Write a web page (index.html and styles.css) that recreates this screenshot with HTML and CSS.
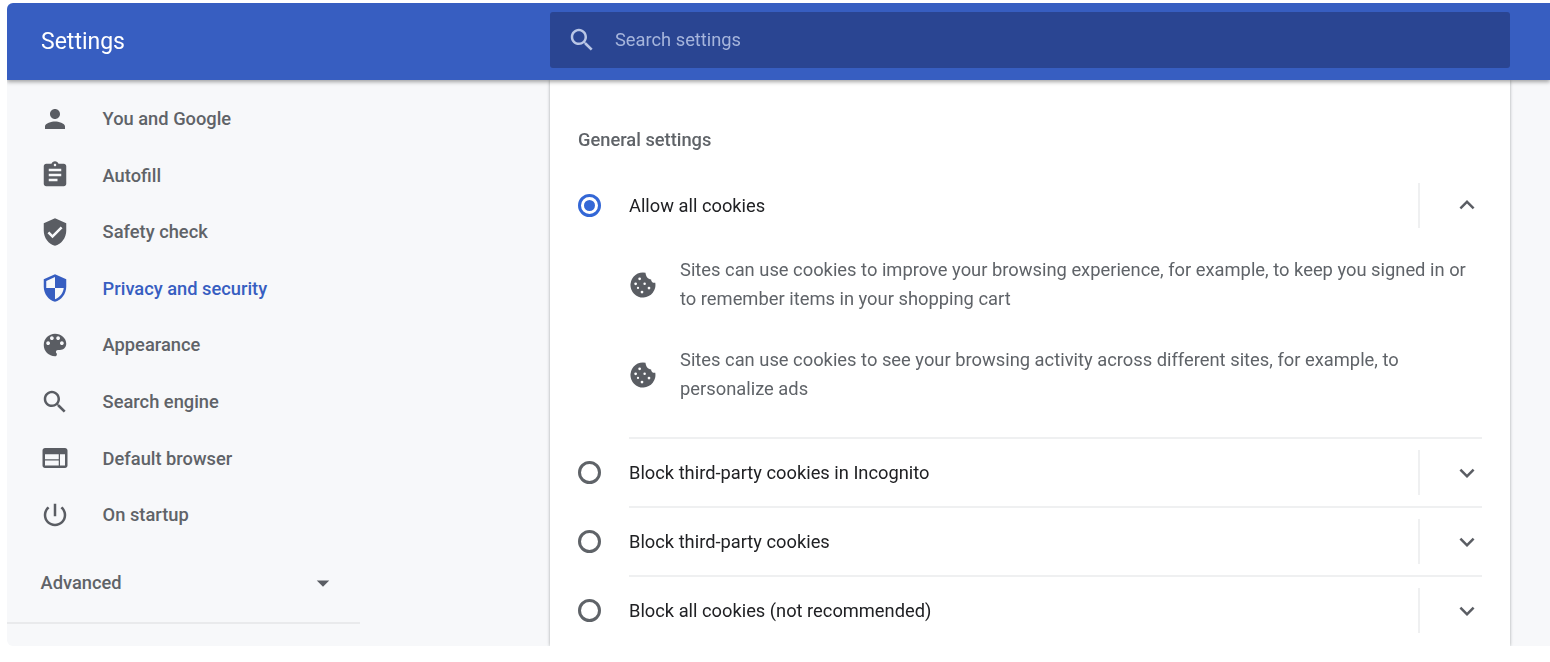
FILE: index.html
```html
<!DOCTYPE html>
<html lang="en">
<head>
    <meta charset="UTF-8">
    <title>Settings - Cookies and other site data</title>
    <link rel="stylesheet" href="styles.css">
</head>
<body>
    <svg class="defs" width="0" height="0">
        <symbol id="i-search" viewBox="0 0 24 24"><path d="M15.5 14h-.79l-.28-.27C15.41 12.59 16 11.11 16 9.5 16 5.91 13.09 3 9.5 3S3 5.91 3 9.5 5.91 16 9.5 16c1.61 0 3.09-.59 4.23-1.57l.27.28v.79l5 4.99L20.49 19l-4.99-5zm-6 0C7.01 14 5 11.99 5 9.5S7.01 5 9.5 5 14 7.01 14 9.5 11.99 14 9.5 14z"/></symbol>
        <symbol id="i-cookie" viewBox="0 0 24 24"><path fill-rule="evenodd" d="M14 2.2A10 10 0 1 0 21.8 10.2C19.5 10.5 18.5 9 18.5 7.5 16 7.5 14.2 5 14 2.2zM9.3 5.9a1.1 1.1 0 1 1 0 2.2 1.1 1.1 0 0 1 0-2.2zM6.1 9.9a1.1 1.1 0 1 1 0 2.2 1.1 1.1 0 0 1 0-2.2zM13.3 10a1 1 0 1 1 0 2 1 1 0 0 1 0-2zM16.8 13.3a1.1 1.1 0 1 1 0 2.2 1.1 1.1 0 0 1 0-2.2zM11.2 16.5a1.1 1.1 0 1 1 0 2.2 1.1 1.1 0 0 1 0-2.2zM8 13.4a.9.9 0 1 1 0 1.8.9.9 0 0 1 0-1.8z"/></symbol>
        <symbol id="i-more" viewBox="0 0 24 24"><path d="M16.59 8.59L12 13.17 7.41 8.59 6 10l6 6 6-6z"/></symbol>
        <symbol id="i-less" viewBox="0 0 24 24"><path d="M12 8l-6 6 1.41 1.41L12 10.83l4.59 4.58L18 14z"/></symbol>
    </svg>

    <div class="app">
        <header class="topbar">
            <div class="topbar-title">Settings</div>
            <div class="search">
                <svg class="icon search-icon"><use href="#i-search"/></svg>
                <span class="search-text">Search settings</span>
            </div>
        </header>

        <div class="content">
            <nav class="sidebar">
                <a class="nav-item">
                    <svg class="icon" viewBox="0 0 24 24"><path d="M12 12c2.21 0 4-1.79 4-4s-1.79-4-4-4-4 1.79-4 4 1.79 4 4 4zm0 2c-2.67 0-8 1.34-8 4v2h16v-2c0-2.66-5.33-4-8-4z"/></svg>
                    You and Google
                </a>
                <a class="nav-item">
                    <svg class="icon" viewBox="0 0 24 24"><path d="M19 3h-4.18C14.4 1.84 13.3 1 12 1c-1.3 0-2.4.84-2.82 2H5c-1.1 0-2 .9-2 2v14c0 1.1.9 2 2 2h14c1.1 0 2-.9 2-2V5c0-1.1-.9-2-2-2zm-7 0c.55 0 1 .45 1 1s-.45 1-1 1-1-.45-1-1 .45-1 1-1zm2 14H7v-2h7v2zm3-4H7v-2h10v2zm0-4H7V7h10v2z"/></svg>
                    Autofill
                </a>
                <a class="nav-item">
                    <svg class="icon" viewBox="0 0 24 24"><path d="M12 1L3 5v6c0 5.55 3.84 10.74 9 12 5.16-1.26 9-6.45 9-12V5l-9-4zm-2 16l-4-4 1.41-1.41L10 14.17l6.59-6.59L18 9l-8 8z"/></svg>
                    Safety check
                </a>
                <a class="nav-item active">
                    <svg class="icon" viewBox="0 0 24 24"><path d="M12 1L3 5v6c0 5.55 3.84 10.74 9 12 5.16-1.26 9-6.45 9-12V5l-9-4zm0 10.99h7c-.53 4.12-3.28 7.79-7 8.94V12H5V6.3l7-3.11v8.8z"/></svg>
                    Privacy and security
                </a>
                <a class="nav-item">
                    <svg class="icon" viewBox="0 0 24 24"><path d="M12 3c-4.97 0-9 4.03-9 9s4.03 9 9 9c.83 0 1.5-.67 1.5-1.5 0-.39-.15-.74-.39-1.01-.23-.26-.38-.61-.38-.99 0-.83.67-1.5 1.5-1.5H16c2.76 0 5-2.24 5-5 0-4.42-4.03-8-9-8zm-5.5 9c-.83 0-1.5-.67-1.5-1.5S5.67 9 6.5 9 8 9.67 8 10.5 7.33 12 6.5 12zm3-4C8.67 8 8 7.33 8 6.5S8.67 5 9.5 5s1.5.67 1.5 1.5S10.33 8 9.5 8zm5 0c-.83 0-1.5-.67-1.5-1.5S13.67 5 14.5 5s1.5.67 1.5 1.5S15.33 8 14.5 8zm3 4c-.83 0-1.5-.67-1.5-1.5S16.67 9 17.5 9s1.5.67 1.5 1.5-.67 1.5-1.5 1.5z"/></svg>
                    Appearance
                </a>
                <a class="nav-item">
                    <svg class="icon"><use href="#i-search"/></svg>
                    Search engine
                </a>
                <a class="nav-item">
                    <svg class="icon" viewBox="0 0 24 24"><path d="M20 4H4c-1.1 0-1.99.9-1.99 2L2 18c0 1.1.9 2 2 2h16c1.1 0 2-.9 2-2V6c0-1.1-.9-2-2-2zm-5 14H4v-4h11v4zm0-5H4V9h11v4zm5 5h-4V9h4v9z"/></svg>
                    Default browser
                </a>
                <a class="nav-item">
                    <svg class="icon" viewBox="0 0 24 24"><path d="M13 3h-2v10h2V3zm4.83 2.17l-1.42 1.42C17.99 7.86 19 9.81 19 12c0 3.87-3.13 7-7 7s-7-3.13-7-7c0-2.19 1.01-4.14 2.58-5.42L6.17 5.17C4.23 6.82 3 9.26 3 12c0 4.97 4.03 9 9 9s9-4.03 9-9c0-2.74-1.23-5.18-3.17-6.83z"/></svg>
                    On startup
                </a>
                <div class="advanced">
                    <span>Advanced</span>
                    <svg class="icon" viewBox="0 0 24 24"><path d="M7 10l5 5 5-5z"/></svg>
                </div>
            </nav>

            <main class="card">
                <h2 class="card-heading">General settings</h2>

                <div class="option">
                    <span class="radio checked"></span>
                    <div class="option-body first">
                        <span class="option-label">Allow all cookies</span>
                        <span class="option-sep"></span>
                        <svg class="icon"><use href="#i-less"/></svg>
                    </div>
                </div>
                <div class="details">
                    <div class="detail">
                        <svg class="icon"><use href="#i-cookie"/></svg>
                        <p>Sites can use cookies to improve your browsing experience, for example, to keep you signed in or to remember items in your shopping cart</p>
                    </div>
                    <div class="detail">
                        <svg class="icon"><use href="#i-cookie"/></svg>
                        <p>Sites can use cookies to see your browsing activity across different sites, for example, to personalize ads</p>
                    </div>
                </div>

                <div class="option">
                    <span class="radio"></span>
                    <div class="option-body">
                        <span class="option-label">Block third-party cookies in Incognito</span>
                        <span class="option-sep"></span>
                        <svg class="icon"><use href="#i-more"/></svg>
                    </div>
                </div>
                <div class="option">
                    <span class="radio"></span>
                    <div class="option-body">
                        <span class="option-label">Block third-party cookies</span>
                        <span class="option-sep"></span>
                        <svg class="icon"><use href="#i-more"/></svg>
                    </div>
                </div>
                <div class="option">
                    <span class="radio"></span>
                    <div class="option-body">
                        <span class="option-label">Block all cookies (not recommended)</span>
                        <span class="option-sep"></span>
                        <svg class="icon"><use href="#i-more"/></svg>
                    </div>
                </div>
            </main>
        </div>
    </div>
</body>
</html>
```

FILE: styles.css
```css
html, body {
    height: 100%;
}
body {
    margin: 0;
    background-color: #fff;
    font-family: Roboto, "Liberation Sans", sans-serif;
    overflow: hidden;
}
.defs {
    position: absolute;
}
.app {
    margin: 3px 0 0 7px;
    height: 643px;
    display: flex;
    flex-direction: column;
    background-color: #f7f8fa;
    border-radius: 6px 0 0 6px;
    overflow: hidden;
    filter: blur(0.6px);
}
.icon {
    width: 30px;
    height: 30px;
    flex: none;
    fill: #5a5d63;
}

/* top bar */
.topbar {
    height: 77px;
    flex: none;
    box-sizing: border-box;
    padding-bottom: 4px;
    display: flex;
    align-items: center;
    background-color: #375ec1;
    box-shadow: 0 2px 4px rgba(0, 0, 0, 0.35);
    position: relative;
    z-index: 1;
}
.topbar-title {
    width: 509px;
    padding: 4px 0 0 34px;
    color: #fff;
    font-size: 23px;
}
.search {
    width: 960px;
    height: 56px;
    display: flex;
    align-items: center;
    gap: 18px;
    padding-left: 17px;
    box-sizing: border-box;
    background-color: #2a4592;
    border-radius: 3px;
}
.search-icon {
    fill: #b9c6e6;
}
.search-text {
    color: #a6b5dc;
    font-size: 18.3px;
}

.content {
    flex: 1;
    display: flex;
    min-height: 0;
}

/* left navigation */
.sidebar {
    width: 353px;
    margin-right: 190px;
    height: 544px;
    padding-top: 10.3px;
    box-sizing: border-box;
    border-bottom: 2px solid #e9eaec;
    flex: none;
}
.nav-item {
    height: 56.6px;
    display: flex;
    align-items: center;
    gap: 32.6px;
    padding-left: 33px;
    color: #5f6368;
    font-size: 18.3px;
    font-weight: 500;
}
.nav-item.active {
    color: #375ec1;
}
.nav-item.active .icon {
    fill: #375ec1;
}
.advanced {
    height: 56px;
    margin-top: 11.5px;
    display: flex;
    align-items: center;
    justify-content: space-between;
    padding: 0 22px 0 33.6px;
    color: #5f6368;
    font-size: 18.3px;
    font-weight: 500;
}

/* main card */
.card {
    width: 960px;
    flex: none;
    padding: 0 28px;
    box-sizing: border-box;
    background-color: #fff;
    box-shadow: 0 0 3px rgba(60, 64, 67, 0.45);
}
.card-heading {
    margin: 0;
    padding: 48px 0 18.5px;
    color: #5f6368;
    font-size: 18.3px;
    font-weight: 500;
    line-height: 24px;
}
.option {
    display: flex;
    align-items: center;
    gap: 28px;
}
.option-body {
    flex: 1;
    height: 69px;
    box-sizing: border-box;
    display: flex;
    align-items: center;
    border-top: 2px solid #eff0f1;
}
.option-body.first {
    border-top: none;
}
.option-label {
    flex: 1;
    color: #202124;
    font-size: 18.3px;
}
.option-sep {
    width: 2px;
    height: 45px;
    margin-right: 32px;
    background-color: #eff0f1;
}

.radio {
    width: 23px;
    height: 23px;
    flex: none;
    box-sizing: border-box;
    margin-top: 2px;
    border: 3px solid #5f6368;
    border-radius: 50%;
}
.radio.checked {
    margin-top: 0;
    border-color: #3367d6;
    padding: 3px;
    background-color: #3367d6;
    background-clip: content-box;
}

.details {
    padding: 16.5px 0 34px 50px;
}
.detail {
    display: flex;
    align-items: center;
    gap: 22px;
}
.detail + .detail {
    margin-top: 33px;
}
.detail p {
    margin: 0;
    color: #5f6368;
    font-size: 18.33px;
    line-height: 28.5px;
}
```
